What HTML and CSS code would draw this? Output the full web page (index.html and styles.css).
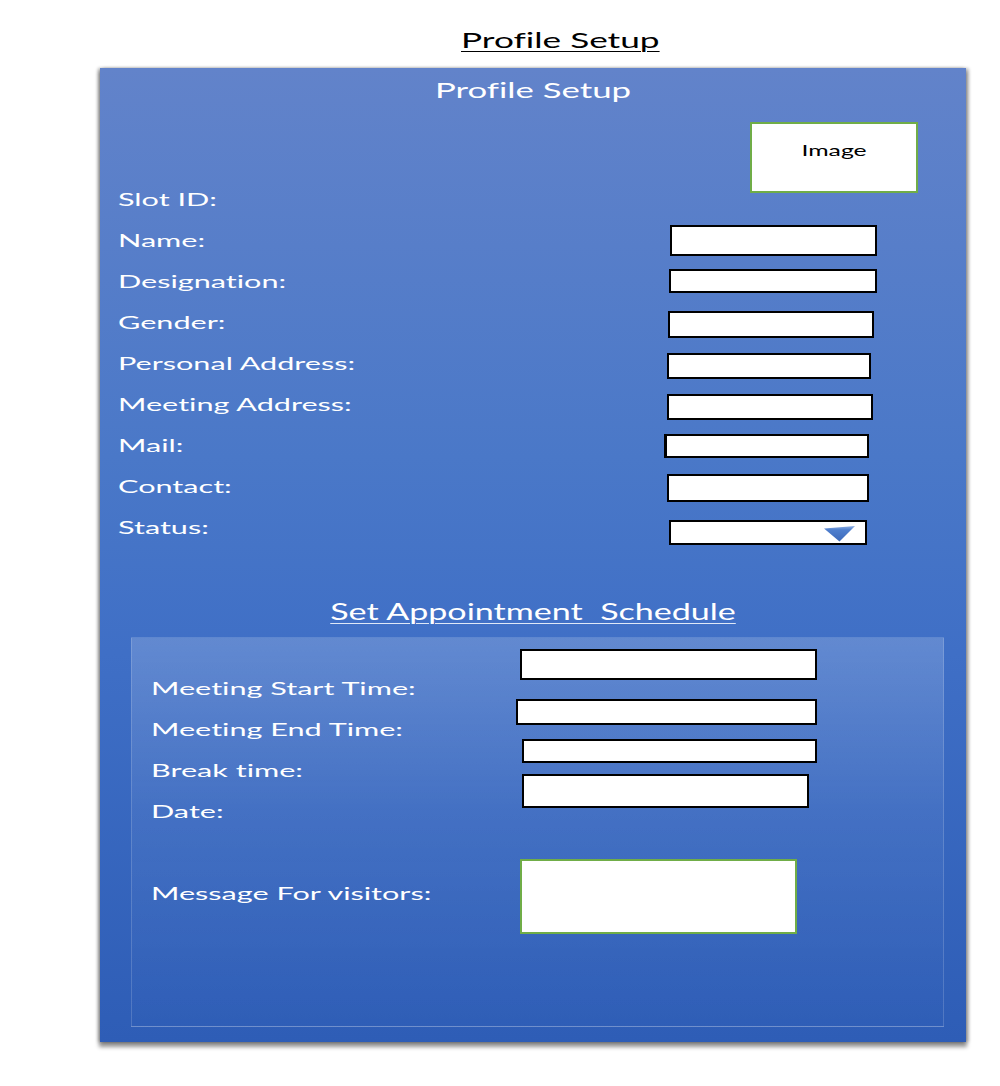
FILE: index.html
```html
<!DOCTYPE html>
<html lang="en">
<head>
<meta charset="utf-8">
<title>Profile Setup</title>
<link rel="stylesheet" href="styles.css">
</head>
<body>
<div class="page">
  <h1 class="doc-title"><span class="sx sx-doc">Profile Setup</span></h1>

  <section class="panel">
    <h2 class="panel-title"><span class="sx sx-title">Profile Setup</span></h2>

    <div class="image-row">
      <div class="image-box"><span class="sx sx-img">Image</span></div>
    </div>

    <div class="fields">
      <div class="row"><span class="lbl"><span class="sx">Slot ID:</span></span></div>
      <div class="row"><span class="lbl"><span class="sx">Name:</span></span><div class="box in-name"></div></div>
      <div class="row"><span class="lbl"><span class="sx">Designation:</span></span><div class="box in-desig"></div></div>
      <div class="row"><span class="lbl"><span class="sx">Gender:</span></span><div class="box in-gender"></div></div>
      <div class="row"><span class="lbl"><span class="sx">Personal Address:</span></span><div class="box in-personal"></div></div>
      <div class="row"><span class="lbl"><span class="sx">Meeting Address:</span></span><div class="box in-meeting"></div></div>
      <div class="row"><span class="lbl"><span class="sx">Mail:</span></span><div class="box in-mail"></div></div>
      <div class="row"><span class="lbl"><span class="sx">Contact:</span></span><div class="box in-contact"></div></div>
      <div class="row"><span class="lbl"><span class="sx">Status:</span></span>
        <div class="box in-status">
          <svg class="caret" width="31" height="16" viewBox="0 0 31 16">
            <defs>
              <linearGradient id="cg" x1="0" y1="0" x2="0" y2="1">
                <stop offset="0" stop-color="#8fb0e4"/>
                <stop offset="0.25" stop-color="#4f7fce"/>
                <stop offset="1" stop-color="#3c69ba"/>
              </linearGradient>
            </defs>
            <polygon points="0,2.5 31,0 15.5,15.5" fill="url(#cg)"/>
          </svg>
        </div>
      </div>
    </div>

    <h3 class="sched-title"><span class="sx sx-sched">Set Appointment&nbsp; Schedule</span></h3>

    <div class="sched">
      <div class="sched-labels">
        <span class="slbl"><span class="sx">Meeting Start Time:</span></span>
        <span class="slbl"><span class="sx">Meeting End Time:</span></span>
        <span class="slbl"><span class="sx">Break time:</span></span>
        <span class="slbl"><span class="sx">Date:</span></span>
        <span class="slbl slbl-msg"><span class="sx">Message For visitors:</span></span>
      </div>
      <div class="sched-inputs">
        <div class="box s-start"></div>
        <div class="box s-end"></div>
        <div class="box s-break"></div>
        <div class="box s-date"></div>
        <div class="msg-box"></div>
      </div>
    </div>
  </section>
</div>
</body>
</html>
```

FILE: styles.css
```css
* { box-sizing: border-box; }

body {
  margin: 0;
  background: #ffffff;
  font-family: "Lato", "Open Sans", sans-serif;
  font-variant-ligatures: none;
}

.page {
  width: 1000px;
  padding-bottom: 30px;
}

.sx {
  display: inline-block;
  white-space: pre;
  transform: scaleX(1.7);
  transform-origin: left center;
}

.doc-title {
  margin: 0;
  padding: 27px 0 0 461px;
  font-size: 22px;
  line-height: 26px;
  font-weight: 400;
  color: #000;
}
.sx-doc {
  transform: scaleX(1.6);
  text-decoration: underline;
  text-decoration-thickness: 1px;
  text-underline-offset: 3px;
}

.panel {
  margin: 15px 0 0 100px;
  width: 866px;
  height: 974px;
  padding-top: 9px;
  background: linear-gradient(180deg, #6283ca 0%, #4a78c8 40%, #3f6fc6 60%, #2e5db6 100%);
  box-shadow: 0 4px 4px 1px rgba(0, 0, 0, 0.42), -2px 0 3px rgba(0, 0, 0, 0.25), 3px 0 3px rgba(0, 0, 0, 0.2);
  color: #ffffff;
}

.panel-title {
  margin: 0;
  font-size: 22px;
  line-height: 26px;
  font-weight: 400;
  text-align: center;
}
.sx-title {
  transform: scaleX(1.58);
  transform-origin: center center;
}

.image-row {
  display: flex;
  justify-content: flex-end;
  padding-right: 48px;
  margin-top: 19px;
  margin-bottom: -14px;
}
.image-box {
  width: 168px;
  height: 71px;
  background: #fff;
  border: 2px solid #70ad47;
  color: #000;
  font-size: 16px;
  line-height: 20px;
  padding-top: 16px;
  text-align: center;
}
.sx-img {
  transform: scaleX(1.55);
  transform-origin: center center;
}

.fields {
  padding-left: 18px;
}
.row {
  display: grid;
  grid-template-columns: 550px 230px;
  height: 41px;
  align-items: start;
}
.lbl {
  font-size: 18px;
  line-height: 41px;
}

.box {
  background: #fff;
  border: 2px solid #000;
}
.in-name     { margin: 5px 0 0 2px;  width: 207px; height: 31px; }
.in-desig    { margin: 8px 0 0 1px;  width: 208px; height: 24px; }
.in-gender   { margin: 9px 0 0 0;    width: 206px; height: 27px; }
.in-personal { margin: 10px 0 0 -1px; width: 204px; height: 26px; }
.in-meeting  { margin: 10px 0 0 -1px; width: 206px; height: 26px; }
.in-mail     { margin: 9px 0 0 -4px; width: 205px; height: 24px; border-left-width: 3px; }
.in-contact  { margin: 8px 0 0 -1px; width: 202px; height: 28px; }
.in-status   {
  margin: 13px 0 0 1px; width: 198px; height: 25px;
  display: flex;
  justify-content: flex-end;
  align-items: flex-start;
  padding: 4px 10px 0 0;
}
.caret { display: block; }

.sched-title {
  margin: 43px 0 0 0;
  font-size: 23px;
  line-height: 40px;
  font-weight: 400;
  text-align: center;
}
.sx-sched {
  transform: scaleX(1.48);
  transform-origin: center center;
  text-decoration: underline;
  text-decoration-thickness: 1px;
  text-underline-offset: 3px;
  text-decoration-color: #dfe8f7;
}

.sched {
  margin: 6px 22px 0 31px;
  height: 390px;
  border: 1px solid rgba(255, 255, 255, 0.16);
  background: linear-gradient(180deg, rgba(255, 255, 255, 0.18) 0%, rgba(255, 255, 255, 0.06) 45%, rgba(255, 255, 255, 0) 100%);
  display: grid;
  grid-template-columns: 388px 1fr;
}

.sched-labels {
  display: flex;
  flex-direction: column;
  padding: 30px 0 0 19px;
}
.slbl {
  font-size: 18px;
  line-height: 41px;
  height: 41px;
}
.slbl-msg { margin-top: 41px; }

.sched-inputs {
  display: flex;
  flex-direction: column;
  align-items: flex-start;
}
.s-start { margin: 11px 0 0 0;    width: 297px; height: 31px; }
.s-end   { margin: 19px 0 0 -4px; width: 301px; height: 26px; }
.s-break { margin: 14px 0 0 2px;  width: 295px; height: 24px; }
.s-date  { margin: 11px 0 0 2px;  width: 287px; height: 34px; }
.msg-box {
  margin: 51px 0 0 0;
  width: 277px;
  height: 75px;
  background: #fff;
  border: 2px solid #70ad47;
}
```
